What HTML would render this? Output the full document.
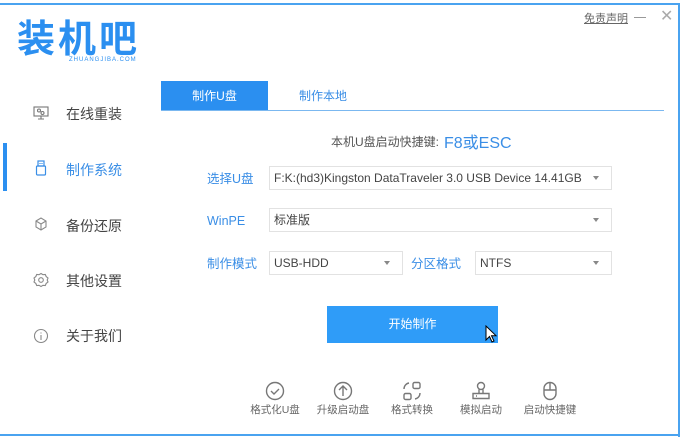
<!DOCTYPE html>
<html><head><meta charset="utf-8"><style>
*{margin:0;padding:0;box-sizing:border-box}
body{width:684px;height:437px;background:#fff;position:relative;overflow:hidden;font-family:"Liberation Sans","Noto Sans CJK SC",sans-serif;color:#555}
.a{position:absolute}
.sel{position:absolute;height:24px;border:1px solid #e2e2e2;background:#fff;font-size:12px;color:#444;line-height:22px;padding-left:4px}
.sel:after{content:"";position:absolute;right:12px;top:9px;border:3px solid transparent;border-top:4px solid #888}
.lbl{position:absolute;font-size:12.5px;color:#3a8ee6;line-height:24px}
.nav{position:absolute;left:66px;font-size:14px;color:#444}
.bt{position:absolute;top:402px;font-size:10.5px;color:#666;width:70px;text-align:center}
</style></head><body>
<div class="a" style="left:0;top:3px;width:680px;height:2px;background:#4aa3f0"></div>
<div class="a" style="left:678px;top:3px;width:2px;height:434px;background:#4aa3f0"></div>
<div class="a" style="left:0;top:434px;width:680px;height:2px;background:#4aa3f0"></div>
<div class="a" style="left:17px;top:12px;font-size:38px;font-weight:bold;color:#2b8ff0;letter-spacing:3px;font-family:'Noto Sans CJK SC',sans-serif;line-height:48px">装机吧</div>
<div class="a" style="left:69px;top:57px;font-size:6px;color:#2b8ff0;letter-spacing:1px">ZHUANGJIBA.COM</div>
<div class="a" style="left:584px;top:10px;font-size:11px;color:#666;text-decoration:underline">免责声明</div>
<div class="a" style="left:634px;top:17px;width:12px;height:1px;background:#999"></div>
<div class="a" style="left:660px;top:6px;font-size:16px;color:#aaa">✕</div>
<div class="a" style="left:3px;top:143px;width:4px;height:48px;background:#2b8ff0"></div>
<svg class="a" style="left:33px;top:105px" width="16" height="16" viewBox="0 0 16 16" fill="none" stroke="#777" stroke-width="1.1"><rect x="1" y="2" width="14" height="9"/><circle cx="6" cy="5.5" r="1.5"/><circle cx="9.5" cy="8" r="1.5"/><path d="M8 11v3M5 14h6"/></svg>
<div class="nav" style="top:104px">在线重装</div>
<svg class="a" style="left:35px;top:160px" width="12" height="17" viewBox="0 0 12 17" fill="none" stroke="#3a8ee6" stroke-width="1.2"><rect x="3" y="1" width="6" height="5"/><rect x="1.5" y="6" width="9" height="9" rx="1"/><path d="M5 3v1M7 3v1"/></svg>
<div class="nav" style="top:160px;color:#3a8ee6">制作系统</div>
<svg class="a" style="left:33px;top:216px" width="16" height="16" viewBox="0 0 16 16" fill="none" stroke="#888" stroke-width="1.1"><path d="M3 5l5-3 5 3v6l-5 3-5-3z M8 8v6 M3 5l5 3 5-3"/></svg>
<div class="nav" style="top:216px">备份还原</div>
<svg class="a" style="left:33px;top:272px" width="16" height="16" viewBox="0 0 16 16" fill="none" stroke="#888" stroke-width="1.1"><path d="M8 1.5l2 1.2 2.3-.2.9 2.1 1.8 1.4-.8 2 .8 2-1.8 1.4-.9 2.1-2.3-.2-2 1.2-2-1.2-2.3.2-.9-2.1L1 10l.8-2L1 6l1.8-1.4.9-2.1 2.3.2z"/><circle cx="8" cy="8" r="2.3"/></svg>
<div class="nav" style="top:271px">其他设置</div>
<svg class="a" style="left:33px;top:328px" width="16" height="16" viewBox="0 0 16 16" fill="none" stroke="#888" stroke-width="1.1"><circle cx="8" cy="8" r="6.5"/><path d="M8 7v5M8 4.5v1"/></svg>
<div class="nav" style="top:326px">关于我们</div>
<div class="a" style="left:161px;top:81px;width:107px;height:30px;background:#2b8ff0;color:#fff;font-size:12px;text-align:center;line-height:31px">制作U盘</div>
<div class="a" style="left:268px;top:81px;width:110px;height:30px;color:#3a8ee6;font-size:12px;text-align:center;line-height:31px">制作本地</div>
<div class="a" style="left:161px;top:110px;width:503px;height:1px;background:#7bb8f0"></div>
<div class="a" style="left:331px;top:133px;font-size:12px;color:#555">本机U盘启动快捷键:</div>
<div class="a" style="left:444px;top:129px;font-size:16px;color:#3a8ee6">F8或ESC</div>
<div class="lbl" style="left:207px;top:167px">选择U盘</div>
<div class="sel" style="left:269px;top:166px;width:343px">F:K:(hd3)Kingston DataTraveler 3.0 USB Device 14.41GB</div>
<div class="lbl" style="left:207px;top:209px">WinPE</div>
<div class="sel" style="left:269px;top:208px;width:343px">标准版</div>
<div class="lbl" style="left:207px;top:252px">制作模式</div>
<div class="sel" style="left:269px;top:251px;width:134px">USB-HDD</div>
<div class="lbl" style="left:411px;top:252px">分区格式</div>
<div class="sel" style="left:475px;top:251px;width:137px">NTFS</div>
<div class="a" style="left:327px;top:306px;width:171px;height:37px;background:#2f9cf8;color:#fff;font-size:12px;text-align:center;line-height:37px">开始制作</div>
<svg class="a" style="left:485px;top:325px" width="12" height="18" viewBox="0 0 12 18"><path d="M1 1v14l3.5-3.5 2.5 5.5 2-1-2.5-5.3H11z" fill="#fff" stroke="#000" stroke-width="1"/></svg>
<svg class="a" style="left:265px;top:381px" width="20" height="20" viewBox="0 0 20 20" fill="none" stroke="#777" stroke-width="1.4"><circle cx="10" cy="10" r="8.5"/><path d="M6 10l3 3 5-5"/></svg>
<svg class="a" style="left:333px;top:381px" width="20" height="20" viewBox="0 0 20 20" fill="none" stroke="#777" stroke-width="1.4"><circle cx="10" cy="10" r="8.5"/><path d="M10 15V5M6 9l4-4 4 4"/></svg>
<svg class="a" style="left:402px;top:381px" width="20" height="20" viewBox="0 0 20 20" fill="none" stroke="#777" stroke-width="1.4"><rect x="11" y="1.5" width="7" height="6" rx="1.5"/><rect x="2" y="12.5" width="7" height="6" rx="1.5"/><path d="M2 8a6 6 0 0 1 5-6M18 12a6 6 0 0 1-5 6"/></svg>
<svg class="a" style="left:471px;top:381px" width="20" height="20" viewBox="0 0 20 20" fill="none" stroke="#777" stroke-width="1.4"><circle cx="10" cy="5" r="3.5"/><path d="M8 8.5v4M12 8.5v4M2 12.5h16v5H2z"/><path d="M5 15h1"/></svg>
<svg class="a" style="left:540px;top:381px" width="20" height="20" viewBox="0 0 20 20" fill="none" stroke="#777" stroke-width="1.4"><rect x="4" y="1.5" width="12" height="17" rx="6"/><path d="M4 9h12M10 1.5V9"/></svg>
<div class="bt" style="left:240px">格式化U盘</div>
<div class="bt" style="left:308px">升级启动盘</div>
<div class="bt" style="left:377px">格式转换</div>
<div class="bt" style="left:446px">模拟启动</div>
<div class="bt" style="left:515px">启动快捷键</div>
</body></html>
